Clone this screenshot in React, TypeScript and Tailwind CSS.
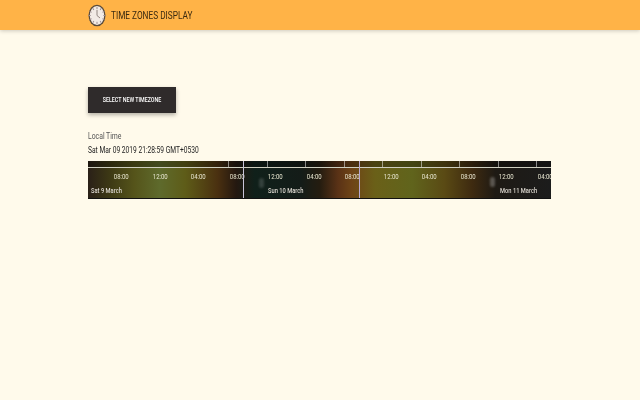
const hours = ["08:00", "12:00", "04:00", "08:00", "12:00", "04:00", "08:00", "12:00", "04:00", "08:00", "12:00", "04:00"];

function Clock() {
  const marks = Array.from({ length: 12 }, (_, i) => i * 30);
  return (
    <svg width="18" height="23" viewBox="0 0 18 23">
      <ellipse cx="9" cy="11.5" rx="8.5" ry="10.8" fill="#5a4c3c" />
      <ellipse cx="9" cy="11.5" rx="7.2" ry="9.4" fill="#f2ebe6" />
      {marks.map((deg) => (
        <rect key={deg} x="8.5" y="3" width="1" height="2.2" fill="#9c8f92" transform={`rotate(${deg} 9 11.5)`} />
      ))}
      <path d="M9 11.5V6M9 11.5l3 2.5" stroke="#7a6d68" strokeWidth="0.8" fill="none" />
    </svg>
  );
}

export default function App() {
  return (
    <div className="h-[400px] w-[640px] overflow-hidden bg-[#fffaeb] font-['Roboto',sans-serif]">
      <header className="flex h-[30px] items-center gap-[5px] bg-[#ffb347] pl-[88px] shadow-[0_1px_4px_rgba(0,0,0,0.2)]">
        <Clock />
        <h1 className="origin-left scale-x-[0.75] whitespace-nowrap text-[11px] leading-none text-[#3a2a10]">TIME ZONES DISPLAY</h1>
      </header>

      <main className="pl-[88px] pt-[57px]">
        <button className="block h-[26px] w-[88px] bg-[#2f2b2b] shadow-[0_2px_4px_rgba(0,0,0,0.3)]">
          <span className="block scale-x-[0.71] whitespace-nowrap text-[7.5px] font-medium text-white">SELECT NEW TIMEZONE</span>
        </button>

        <p className="mt-[17px] origin-left scale-x-[0.72] text-[9.5px] leading-[12px] text-[#555]">Local Time</p>
        <p className="mt-[2px] origin-left scale-x-[0.7] whitespace-nowrap text-[9.5px] leading-[12px] text-[#222]">Sat Mar 09 2019 21:28:59 GMT+0530</p>

        <div className="relative mt-[5px] h-[38px] w-[463px] overflow-hidden border-b border-[#111] bg-[linear-gradient(90deg,#2a2018_0%,#3e3a14_5%,#55541a_10%,#5e6a2c_15.5%,#5e5c18_21%,#4a3010_28%,#241810_32%,#10201a_36%,#141c18_46%,#241c10_50%,#5a3216_54%,#6e4416_57%,#6a6018_62%,#60641c_70%,#5a4a14_77%,#3e2a10_83%,#1e1a14_88%,#1c1c1c_100%)]">
          <div className="flex h-[7px] border-b border-[#cfcfc0] bg-black/30">
            {Array.from({ length: 12 }, (_, i) => (
              <span key={i} className={`w-[38.5px] shrink-0 -translate-x-[13px] border-r ${i < 3 ? "border-transparent" : "border-white/50"}`} />
            ))}
          </div>
          <div className="flex pl-[14px] pt-[4px]">
            {hours.map((h, i) => (
              <span key={i} className="w-[38.5px] shrink-0 scale-x-[0.75] text-center text-[8px] leading-[10px] text-[#e8e6d0]">
                {h}
              </span>
            ))}
          </div>
          <div className="flex pl-[3px] pt-[5px] text-[7px] font-medium leading-[8px] text-[#ddd8d0]">
            <span className="w-[177px] origin-left scale-x-[0.82]">Sat 9 March</span>
            <span className="w-[232px] origin-left scale-x-[0.82]">Sun 10 March</span>
            <span className="origin-left scale-x-[0.82] whitespace-nowrap">Mon 11 March</span>
          </div>
          <div className="absolute inset-y-0 left-[155px] w-px bg-[#c8c4d8]" />
          <div className="absolute inset-y-0 left-[271px] w-px bg-[#b8a8d0]" />
          <div className="absolute left-[171px] top-[17px] h-[10px] w-[5px] rounded-full bg-white/15 blur-[1px]" />
          <div className="absolute left-[402px] top-[16px] h-[10px] w-[5px] rounded-full bg-white/25 blur-[1px]" />
        </div>
      </main>
    </div>
  );
}
